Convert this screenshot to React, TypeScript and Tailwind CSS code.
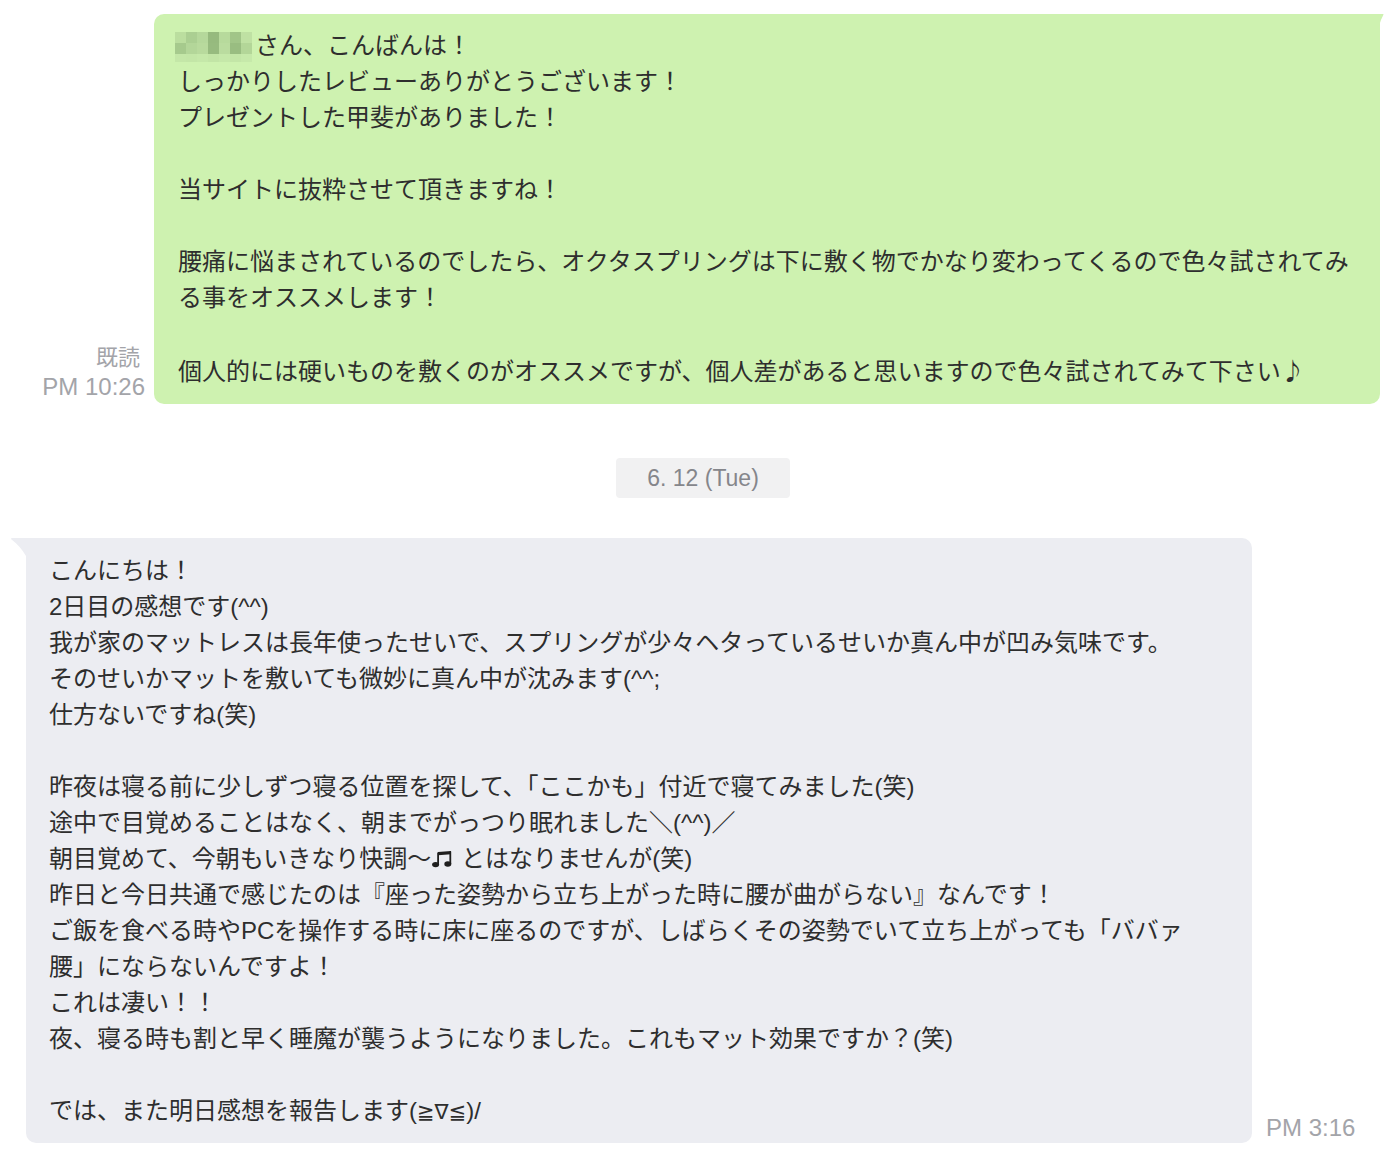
import React from "react";

const FONT = '"Liberation Sans", "Noto Sans CJK JP", sans-serif';

const mosaic: string[][] = [
  ["#bbde9f", "#abcf92", "#b5d89b", "#96ba7e", "#b7da9c", "#a1c588", "#bfe1a3"],
  ["#a6ca8d", "#b3d699", "#b8da9d", "#97bb7f", "#badc9f", "#99bd81", "#b3d698"],
  ["#c4e7a8", "#c3e6a7", "#c5e8a9", "#c2e5a6", "#c5e8a9", "#c3e6a7", "#c6e9aa"],
];
const rowH = ["h-[11px]", "h-[11px]", "h-[8px]"];

function Mosaic() {
  return (
    <span className="inline-block align-top mt-[4px] ml-[-3px] mr-[3px]">
      {mosaic.map((row, i) => (
        <span key={i} className="flex">
          {row.map((c, j) => (
            <span key={j} className={`block w-[11px] ${rowH[i]}`} style={{ background: c }} />
          ))}
        </span>
      ))}
    </span>
  );
}

function BeamedNotes() {
  return (
    <svg className="inline-block align-[-1px] mx-[1px]" width="21" height="17" viewBox="0 0 21 17">
      <path d="M6 1 L19 0 L19 3.2 L6 4.2 Z" fill="#1f1f1f" />
      <rect x="5.2" y="1.5" width="1.8" height="12" fill="#1f1f1f" />
      <rect x="17.4" y="0.5" width="1.8" height="12.5" fill="#1f1f1f" />
      <ellipse cx="3.6" cy="13.6" rx="3.5" ry="2.7" fill="#1f1f1f" />
      <ellipse cx="15.8" cy="13" rx="3.5" ry="2.7" fill="#1f1f1f" />
    </svg>
  );
}

const greenLines: React.ReactNode[] = [
  <>
    <Mosaic />さん、こんばんは！
  </>,
  "しっかりしたレビューありがとうございます！",
  "プレゼントした甲斐がありました！",
  "",
  "当サイトに抜粋させて頂きますね！",
  "",
  "腰痛に悩まされているのでしたら、オクタスプリングは下に敷く物でかなり変わってくるので色々試されてみ",
  "る事をオススメします！",
  "",
  <>
    個人的には硬いものを敷くのがオススメですが、個人差があると思いますので色々試されてみて下さい
    <span style={{ fontFamily: '"Noto Sans CJK JP", sans-serif' }}>♪</span>
  </>,
];

const greyLines: React.ReactNode[] = [
  "こんにちは！",
  "2日目の感想です(^^)",
  "我が家のマットレスは長年使ったせいで、スプリングが少々ヘタっているせいか真ん中が凹み気味です。",
  "そのせいかマットを敷いても微妙に真ん中が沈みます(^^;",
  "仕方ないですね(笑)",
  "",
  "昨夜は寝る前に少しずつ寝る位置を探して、「ここかも」付近で寝てみました(笑)",
  "途中で目覚めることはなく、朝までがっつり眠れました＼(^^)／",
  <>
    朝目覚めて、今朝もいきなり快調〜<BeamedNotes /> とはなりませんが(笑)
  </>,
  "昨日と今日共通で感じたのは『座った姿勢から立ち上がった時に腰が曲がらない』なんです！",
  "ご飯を食べる時やPCを操作する時に床に座るのですが、しばらくその姿勢でいて立ち上がっても「ババァ",
  "腰」にならないんですよ！",
  "これは凄い！！",
  "夜、寝る時も割と早く睡魔が襲うようになりました。これもマット効果ですか？(笑)",
  "",
  <>
    では、また明日感想を報告します(
    <span className="text-[21px]" style={{ fontFamily: '"DejaVu Sans", sans-serif' }}>≧∇≦</span>)/
  </>,
];

function Lines({ lines }: { lines: React.ReactNode[] }) {
  return (
    <>
      {lines.map((l, i) => (
        <div key={i} className="h-[36px] leading-[36px] whitespace-nowrap">
          {l === "" ? "\u00a0" : l}
        </div>
      ))}
    </>
  );
}

export default function App() {
  return (
    <div
      className="w-[1384px] h-[1158px] bg-white pl-[26px] pr-[4px] pt-[14px] text-[24px] text-[#2e2e2e] overflow-hidden"
      style={{ fontFamily: FONT }}
    >
      {/* outgoing message */}
      <div className="flex justify-end items-end">
        <div className="flex flex-col items-end mr-[9px] mb-[2px] text-[#a3a4a9]">
          <div className="text-[22px] leading-[28px] mr-[5px]">既読</div>
          <div className="text-[24px] leading-[30px]">PM 10:26</div>
        </div>
        <div className="relative w-[1226px] bg-[#cef2b0] rounded-[10px] rounded-tr-none pl-[24px] pr-[20px] pt-[14px] pb-[16px]">
          <svg className="absolute top-0 right-[-4px]" width="5" height="12" viewBox="0 0 5 12">
            <path d="M0 0 L4 0 Q5 0 4.3 1 Q2 5 0 12 Z" fill="#cef2b0" />
          </svg>
          <Lines lines={greenLines} />
        </div>
      </div>

      {/* date divider */}
      <div className="flex justify-center mt-[54px] mb-[40px]">
        <div className="w-[174px] h-[40px] rounded-[4px] bg-[#f1f1f2] text-[#85868b] text-[23px] leading-[40px] text-center">
          6. 12 (Tue)
        </div>
      </div>

      {/* incoming message */}
      <div className="flex items-end">
        <div className="relative w-[1226px] bg-[#ecedf2] rounded-[10px] rounded-tl-none pl-[23px] pr-[20px] pt-[15px] pb-[14px]">
          <svg className="absolute top-0 left-[-16px]" width="16" height="18" viewBox="0 0 16 18">
            <path d="M16 0 L2 0 Q0 0 1.5 1.6 Q10 8 16 18 Z" fill="#ecedf2" />
          </svg>
          <Lines lines={greyLines} />
        </div>
        <div className="ml-[14px] text-[24px] leading-[30px] text-[#a3a4a9]">PM 3:16</div>
      </div>
    </div>
  );
}
